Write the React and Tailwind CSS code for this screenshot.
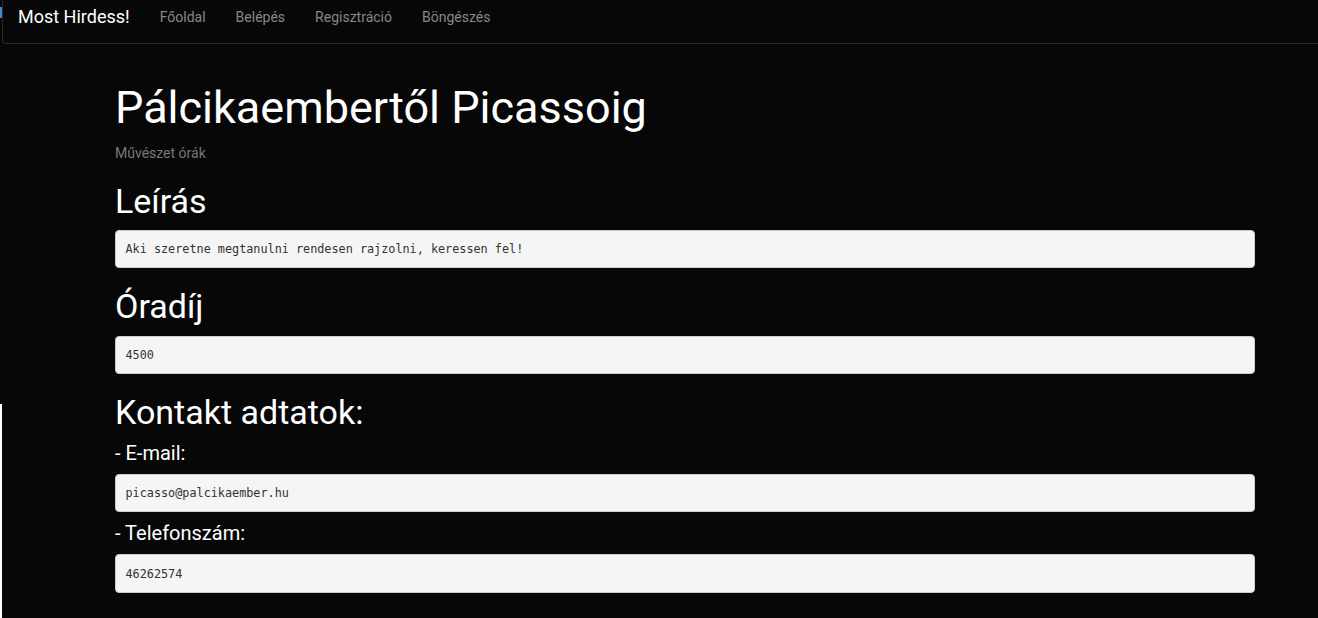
import React from "react";

const navLinks = ["Főoldal", "Belépés", "Regisztráció", "Böngészés"];

function Field({ children }) {
  return (
    <pre className="mb-[10px] rounded-[4px] border border-[#cccccc] bg-[#f5f5f5] px-[9.5px] pt-[9.5px] pb-[8.5px] text-[11.8px] leading-[18.5px] text-[#333333] whitespace-pre-wrap [font-family:'DejaVu_Sans_Mono',monospace]">
      {children}
    </pre>
  );
}

export default function App() {
  return (
    <div className="relative min-h-[618px] bg-[#070707] text-white [font-family:Roboto,'Liberation_Sans',sans-serif]">
      {/* stray edge marks from the original capture */}
      <div className="absolute left-0 top-[7px] h-[11px] w-[2px] bg-[#3b8bd6]" />
      <div className="absolute left-0 top-[404px] bottom-0 w-[2px] bg-white" />

      <nav className="ml-[2px] flex h-[44px] items-start rounded-bl-[4px] border-b border-l border-[#282828] pt-[7px]">
        <span className="px-[15px] text-[18px] leading-[20px] text-white">Most Hirdess!</span>
        {navLinks.map((link) => (
          <span key={link} className="px-[15px] text-[14px] leading-[20px] text-[#888888]">
            {link}
          </span>
        ))}
      </nav>

      <main className="ml-[115px] w-[1140px] pb-[10px]">
        <h1 className="mt-[39px] mb-[10px] text-[45px] leading-[1.1] font-normal">Pálcikaembertől Picassoig</h1>
        <p className="text-[14px] leading-[20px] text-[#777777]">Művészet órák</p>

        <h3 className="mt-[20px] mb-[10px] text-[34px] leading-[1.1] font-normal">Leírás</h3>
        <Field>Aki szeretne megtanulni rendesen rajzolni, keressen fel!</Field>

        <h3 className="mt-[20px] mb-[10px] text-[34px] leading-[1.1] font-normal">Óradíj</h3>
        <Field>4500</Field>

        <h3 className="mt-[20px] mb-[10px] text-[34px] leading-[1.1] font-normal">Kontakt adtatok:</h3>
        <h4 className="mb-[10px] text-[20px] leading-[22px] font-normal">- E-mail:</h4>
        <Field>picasso@palcikaember.hu</Field>
        <h4 className="mt-[10px] mb-[10px] text-[20px] leading-[22px] font-normal">- Telefonszám:</h4>
        <Field>46262574</Field>
      </main>
    </div>
  );
}
